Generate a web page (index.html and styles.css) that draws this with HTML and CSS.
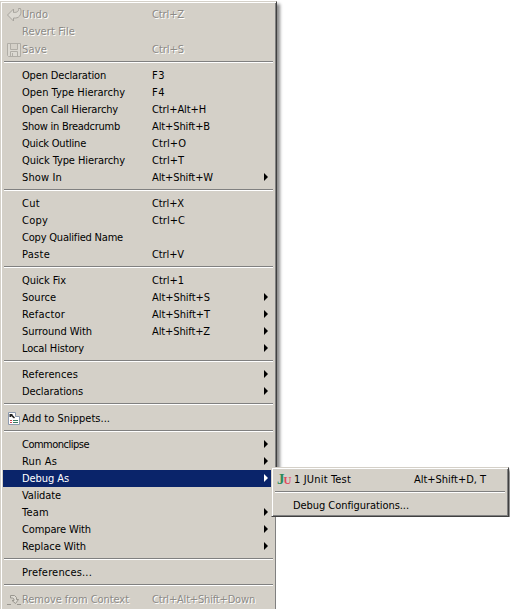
FILE: index.html
```
<!DOCTYPE html>
<html lang="en">
<head>
<meta charset="utf-8">
<title>Context menu</title>
<link rel="stylesheet" href="styles.css">
</head>
<body>
<div class="menu main">
  <div class="item tall off"><svg class="icon" width="16" height="16" viewBox="0 0 16 16"><path d="M.5 8 6.500 2V5.500C10 5.500 12 4.500 11.500 1.500H13.500C15 6 13 11 8.500 11H6.500V14Z" fill="#dcd9d2" stroke="#a6a39d"/></svg><span class="label" data-w="25">Undo</span><span class="key" data-w="31">Ctrl+Z</span></div>
  <div class="item off"><span class="label" data-w="52">Revert File</span></div>
  <div class="item tall off"><svg class="icon" width="16" height="16" viewBox="0 0 16 16"><path d="M.5 1.500H13.500V14.500H1.500L.5 13.500ZM3.500 2V7.500H10.500V2M3.500 14V9.500H10.500V14M5.500 11V14" fill="#dcd9d2" stroke="#b0ada6"/></svg><span class="label" data-w="24">Save</span><span class="key" data-w="31">Ctrl+S</span></div>
  <div class="sep"></div>
  <div class="item"><span class="label" data-w="83">Open Declaration</span><span class="key" data-w="12">F3</span></div>
  <div class="item"><span class="label" data-w="102">Open Type Hierarchy</span><span class="key" data-w="12">F4</span></div>
  <div class="item"><span class="label" data-w="95">Open Call Hierarchy</span><span class="key" data-w="53">Ctrl+Alt+H</span></div>
  <div class="item"><span class="label" data-w="97">Show in Breadcrumb</span><span class="key" data-w="57">Alt+Shift+B</span></div>
  <div class="item"><span class="label" data-w="63">Quick Outline</span><span class="key" data-w="33">Ctrl+O</span></div>
  <div class="item"><span class="label" data-w="102">Quick Type Hierarchy</span><span class="key" data-w="31">Ctrl+T</span></div>
  <div class="item sub"><span class="label" data-w="39">Show In</span><span class="key" data-w="60">Alt+Shift+W</span></div>
  <div class="sep"></div>
  <div class="item"><span class="label" data-w="17">Cut</span><span class="key" data-w="31">Ctrl+X</span></div>
  <div class="item"><span class="label" data-w="25">Copy</span><span class="key" data-w="32">Ctrl+C</span></div>
  <div class="item"><span class="label" data-w="100">Copy Qualified Name</span></div>
  <div class="item"><span class="label" data-w="27">Paste</span><span class="key" data-w="31">Ctrl+V</span></div>
  <div class="sep"></div>
  <div class="item"><span class="label" data-w="43">Quick Fix</span><span class="key" data-w="31">Ctrl+1</span></div>
  <div class="item sub"><span class="label" data-w="33">Source</span><span class="key" data-w="57">Alt+Shift+S</span></div>
  <div class="item sub"><span class="label" data-w="42">Refactor</span><span class="key" data-w="57">Alt+Shift+T</span></div>
  <div class="item sub"><span class="label" data-w="69">Surround With</span><span class="key" data-w="57">Alt+Shift+Z</span></div>
  <div class="item sub"><span class="label" data-w="61">Local History</span></div>
  <div class="sep"></div>
  <div class="item sub"><span class="label" data-w="55">References</span></div>
  <div class="item sub"><span class="label" data-w="60">Declarations</span></div>
  <div class="sep"></div>
  <div class="item tall"><svg class="icon" width="16" height="16" viewBox="0 0 16 16"><path d="M1.500 1.500H8.500V5.500H12.500V13.500H1.500Z" fill="#fff" stroke="#8d9aae"/><path d="M2.500 3H5.500V4L8 6.500 7 7.500 4 5V6H2.500Z" fill="#222"/><path d="M3 9.500H5M3 11.500H5" stroke="#c45"/><path d="M6 9.500H11M6 11.500H11" stroke="#387a62"/></svg><span class="label" data-w="87">Add to Snippets...</span></div>
  <div class="sep"></div>
  <div class="item sub"><span class="label" data-w="66">Commonclipse</span></div>
  <div class="item sub"><span class="label" data-w="34">Run As</span></div>
  <div class="item sub active"><span class="label" data-w="46">Debug As</span></div>
  <div class="item"><span class="label" data-w="38">Validate</span></div>
  <div class="item sub"><span class="label" data-w="26">Team</span></div>
  <div class="item sub"><span class="label" data-w="68">Compare With</span></div>
  <div class="item sub"><span class="label" data-w="63">Replace With</span></div>
  <div class="sep"></div>
  <div class="item"><span class="label" data-w="69">Preferences...</span></div>
  <div class="sep"></div>
  <div class="item tall off"><svg class="icon" width="16" height="16" viewBox="0 0 16 16"><path d="M0 12.500H4M10 12.500H14" stroke="#99968f"/><path d="M3.500 3.500H7.500L9.500 5.500V7.500H11.500L8.500 11.500 5 8.500H7V7L5.500 6H3.500Z" fill="#dedbd4" stroke="#99968f"/></svg><span class="label" data-w="106">Remove from Context</span><span class="key" data-w="102">Ctrl+Alt+Shift+Down</span></div>
</div>
<div class="menu flyout">
  <div class="item"><span class="icon junit"><b class="j">J</b><b class="u">U</b></span><span class="label shifted" data-w="56">1 JUnit Test</span><span class="key" data-w="71">Alt+Shift+D, T</span></div>
  <div class="sep"></div>
  <div class="item"><span class="label" data-w="115">Debug Configurations...</span></div>
</div>
<script src="fit.js"></script>
</body>
</html>
```
FILE: styles.css
```
html, body { margin: 0; background: #fff; overflow: hidden; }
body { position: relative; height: 609px; font: 11px/17px "DejaVu Sans Condensed", "DejaVu Sans", sans-serif; color: #000; }
.menu {
  box-sizing: border-box;
  width: 277px;
  padding: 3px 2px;
  background: #d4d0c8;
  border: 1px solid;
  border-color: #d4d0c8 #404040 #404040 #d4d0c8;
  box-shadow: inset 1px 1px #fff, inset -1px -1px #808080, 3px 3px 3px rgba(0, 0, 0, .45);
}
.main {
  height: 620px;
  margin-top: 1px;
  /* the drop shadow ends where the flyout overlaps the menu's right edge */
  clip-path: polygon(0 0, 290px 0, 290px 510px, 276px 510px, 276px 100%, 0 100%);
}
.item { position: relative; display: grid; grid-template-columns: 19px 130px 1fr; height: 17px; white-space: pre; }
.tall { height: 18px; line-height: 19px; }
.icon { grid-column: 1; align-self: center; margin-left: 4px; }
.label { grid-column: 2; justify-self: start; }
.shifted { margin-left: 1px; }
.key { grid-column: 3; justify-self: start; }
.sep { height: 2px; margin: 3px 1px 4px; background: linear-gradient(#808080 50%, #fff 50%); }
.off { color: #8c8a86; text-shadow: 1px 1px #fff; }
.active { color: #fff; background: #0a246a; }
.sub::after {
  content: "";
  position: absolute;
  right: 6px;
  top: 4px;
  border: 4px solid transparent;
  border-left-color: currentColor;
  border-right: 0;
}
.flyout {
  position: absolute;
  left: 271px;
  top: 467px;
  width: 238px;
  height: 50px;
  clip-path: inset(0 -6px 0 0);
}
.flyout .item { grid-template-columns: 19px 121px 1fr; }
.junit { margin-left: 3px; font: 15px/17px "Liberation Serif", serif; }
.j { color: #2b8a5c; }
.u { color: #e0485c; font-size: 11px; margin-left: -1px; }
```
FILE: fit.js
```
// Track each caption to the width given in its data-w attribute.
document.querySelectorAll("[data-w]").forEach(function (el) {
  var natural = el.getBoundingClientRect().width;
  var target = Number(el.dataset.w) + 1;
  el.style.letterSpacing = (target - natural) / el.textContent.length + "px";
});
```
